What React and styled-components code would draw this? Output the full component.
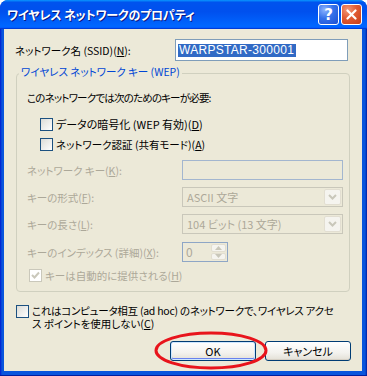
import React from 'react';
import styled, { createGlobalStyle } from 'styled-components';

const GlobalStyle = createGlobalStyle`
  html, body {
    margin: 0;
    padding: 0;
    background: #ffffff;
  }
`;

const Window = styled.div`
  position: relative;
  width: 367px;
  height: 376px;
  display: flex;
  flex-direction: column;
  box-sizing: border-box;
  background: linear-gradient(90deg, #0019cf 0, #0855dd 2px, #0855dd calc(100% - 2px), #001ea0 100%);
  border-bottom: 1px solid #001ea0;
  border-radius: 8px 8px 0 0;
  overflow: hidden;
  font-family: "Noto Sans CJK JP", "Noto Sans", sans-serif;
  font-size: 10.5px;
  font-feature-settings: "palt";
  color: #000000;
`;

const TitleBar = styled.div`
  height: 29px;
  flex: none;
  display: flex;
  align-items: center;
  padding: 0 5px 0 7px;
  background: linear-gradient(180deg, #0997ff, #0053ee 8%, #0050ee 40%, #0066ff 88%, #0066ff 93%, #005bff 95%, #003dd7 96%, #003dd7);
`;

const Title = styled.div`
  flex: 1;
  color: #ffffff;
  font-weight: bold;
  font-size: 12px;
  letter-spacing: -0.2px;
  text-shadow: 1px 1px 0 #0a1883;
  white-space: nowrap;
`;

const CaptionButton = styled.div`
  width: 21px;
  height: 21px;
  box-sizing: border-box;
  border: 1px solid #ffffff;
  border-radius: 3px;
  margin-left: 2px;
  display: flex;
  align-items: center;
  justify-content: center;
  color: #ffffff;
  font-family: "DejaVu Sans", sans-serif;
  font-weight: bold;
  font-size: 15px;
  background: ${p => p.$close
    ? 'radial-gradient(circle at 30% 25%, #f39878 0%, #e05b33 45%, #c63d17 100%)'
    : 'radial-gradient(circle at 30% 25%, #8cb4ff 0%, #3571ea 45%, #1c4fd2 100%)'};
`;

const Client = styled.div`
  flex: 1;
  margin: 0 5px 4px 4px;
  background: #ece9d8;
  padding: 10px 0 0 11px;
  display: flex;
  flex-direction: column;
`;

const FieldRow = styled.div`
  display: flex;
  align-items: center;
  height: ${p => p.$h || 20}px;
  margin-top: ${p => p.$mt || 0}px;
`;

const Label = styled.div`
  width: ${p => p.$w}px;
  flex: none;
  color: ${p => (p.$disabled ? '#aca899' : '#000000')};
  white-space: nowrap;
`;

const TextBox = styled.div`
  width: ${p => p.$w}px;
  height: 100%;
  box-sizing: border-box;
  border: 1px solid ${p => (p.$disabled ? '#a3b6cf' : '#7f9db9')};
  background: ${p => (p.$disabled ? '#ece9d8' : '#ffffff')};
  display: flex;
  align-items: center;
  padding-left: 2px;
  color: #aca899;
`;

const Selection = styled.span`
  background: #316ac5;
  color: #ffffff;
  font-family: "Liberation Sans", Arial, sans-serif;
  font-size: 12px;
  letter-spacing: 0.3px;
  line-height: 13px;
  padding: 0 2px 0 1px;
`;

const Combo = styled.div`
  width: 161px;
  height: 100%;
  box-sizing: border-box;
  border: 1px solid #c9c7ba;
  background: #ece9d8;
  display: flex;
  align-items: center;
  padding: 1px;
  color: #aca899;
`;

const ComboText = styled.span`
  flex: 1;
  padding-left: 3px;
  font-size: 11px;
`;

const DropButton = styled.div`
  width: 17px;
  height: 100%;
  box-sizing: border-box;
  border: 1px solid #e2ded1;
  border-radius: 2px;
  background: #f5f4ef;
  display: flex;
  align-items: center;
  justify-content: center;
`;

const Spin = styled.div`
  width: 46px;
  height: 100%;
  box-sizing: border-box;
  border: 1px solid #8ea6c6;
  background: #ece9d8;
  display: flex;
  padding: 1px;
  color: #aca899;
`;

const SpinText = styled.span`
  flex: 1;
  padding-left: 2px;
  font-size: 12px;
  line-height: 16px;
`;

const SpinButtons = styled.div`
  width: 15px;
  display: flex;
  flex-direction: column;
  gap: 1px;
`;

const SpinButton = styled.div`
  flex: 1;
  border: 1px solid #e2ded1;
  border-radius: 2px;
  background: #f5f4ef;
  display: flex;
  align-items: center;
  justify-content: center;
`;

const Group = styled.div`
  margin: 12px 0 0 1px;
  width: 334px;
  box-sizing: border-box;
  border: 1px solid #d0d0bf;
  border-radius: 4px;
  padding: 0 0 9px 10px;
  display: flex;
  flex-direction: column;
`;

const GroupTitle = styled.div`
  align-self: flex-start;
  margin: -9px 0 0 -8px;
  padding: 0 2px;
  line-height: 14px;
  color: #0046d5;
  background: #ece9d8;
  white-space: nowrap;
`;

const Text = styled.div`
  margin-top: ${p => p.$mt || 0}px;
  line-height: 14px;
  letter-spacing: -0.8px;
  white-space: nowrap;
`;

const CheckRow = styled.div`
  display: flex;
  align-items: ${p => (p.$top ? 'flex-start' : 'center')};
  gap: 3px;
  height: ${p => (p.$h ? `${p.$h}px` : 'auto')};
  margin: ${p => p.$mt || 0}px 0 0 ${p => p.$ml || 0}px;
  color: ${p => (p.$disabled ? '#aca899' : '#000000')};
`;

const Box = styled.span`
  width: 13px;
  height: 13px;
  flex: none;
  box-sizing: border-box;
  border: 1px solid ${p => (p.$disabled ? '#cac8bb' : '#1c5180')};
  background: ${p => (p.$disabled
    ? '#ffffff'
    : 'linear-gradient(135deg, #dcdcd7 0%, #f4f4f2 70%, #ffffff 100%)')};
  margin-top: ${p => p.$mt || 0}px;
  display: flex;
  align-items: center;
  justify-content: center;
`;

const CheckLabel = styled.span`
  font-size: ${p => p.$size || 10.5}px;
  line-height: 13px;
  white-space: nowrap;
`;

const LabelLine = styled.span`
  display: block;
  height: 13px;
  line-height: 13px;
  letter-spacing: ${p => (p.$tight ? '-0.25px' : '0')};
  white-space: nowrap;
`;

const ButtonRow = styled.div`
  display: flex;
  justify-content: flex-end;
  gap: 9px;
  margin-top: 11px;
  padding-right: 11px;
`;

const Button = styled.button`
  width: 86px;
  height: 20px;
  box-sizing: border-box;
  border: 1px solid #003c74;
  border-radius: 3px;
  background: linear-gradient(180deg, #ffffff 0%, #f3f2ee 60%, #e3e0d6 100%);
  box-shadow: ${p => (p.$default
    ? 'inset 0 0 0 1px #cee7ff, inset 0 -1px 0 1px #6982ee'
    : 'inset 0 -1px 0 #d6d0c5')};
  font-family: "Noto Sans CJK JP", "Noto Sans", sans-serif;
  font-feature-settings: "palt";
  font-size: 11px;
  color: #000000;
  padding: 0;
`;

const Mark = styled.svg`
  position: absolute;
  left: 154px;
  top: 331px;
  pointer-events: none;
`;

const Chevron = () => (
  <svg width="9" height="6" viewBox="0 0 9 6">
    <polyline points="1,1 4.5,4.5 8,1" fill="none" stroke="#c9c7ba" strokeWidth="2" />
  </svg>
);

const Arrow = ({ up }) => (
  <svg width="7" height="4" viewBox="0 0 7 4">
    <polygon points={up ? '0,4 3.5,0 7,4' : '0,0 3.5,4 7,0'} fill="#c9c7ba" />
  </svg>
);

const Check = () => (
  <svg width="9" height="9" viewBox="0 0 9 9">
    <polyline points="1,4 3.5,6.5 8,1.5" fill="none" stroke="#cac8bb" strokeWidth="2" />
  </svg>
);

export default function App() {
  return (
    <>
      <GlobalStyle />
      <Window>
        <TitleBar>
          <Title>ワイヤレス ネットワークのプロパティ</Title>
          <CaptionButton>?</CaptionButton>
          <CaptionButton $close>
            <svg width="11" height="11" viewBox="0 0 11 11">
              <path d="M1.5 1.5 L9.5 9.5 M9.5 1.5 L1.5 9.5" stroke="#ffffff" strokeWidth="2.2" strokeLinecap="round" />
            </svg>
          </CaptionButton>
        </TitleBar>

        <Client>
          <FieldRow $h={22}>
            <Label $w={160}>ネットワーク名 (SSID)(<u>N</u>):</Label>
            <TextBox $w={173}>
              <Selection>WARPSTAR-300001</Selection>
            </TextBox>
          </FieldRow>

          <Group>
            <GroupTitle>ワイヤレス ネットワーク キー (WEP)</GroupTitle>
            <Text $mt={12}>このネットワークでは次のためのキーが必要:</Text>
            <CheckRow $h={20} $mt={9} $ml={13}>
              <Box />
              <CheckLabel $size={11}>データの暗号化 (WEP 有効)(<u>D</u>)</CheckLabel>
            </CheckRow>
            <CheckRow $h={20} $ml={13}>
              <Box />
              <CheckLabel>ネットワーク認証 (共有モード)(<u>A</u>)</CheckLabel>
            </CheckRow>

            <FieldRow $mt={6}>
              <Label $w={155} $disabled>ネットワーク キー(<u>K</u>):</Label>
              <TextBox $w={161} $disabled />
            </FieldRow>
            <FieldRow $mt={7}>
              <Label $w={155} $disabled>キーの形式(<u>F</u>):</Label>
              <Combo>
                <ComboText>ASCII 文字</ComboText>
                <DropButton><Chevron /></DropButton>
              </Combo>
            </FieldRow>
            <FieldRow $mt={7}>
              <Label $w={155} $disabled>キーの長さ(<u>L</u>):</Label>
              <Combo>
                <ComboText>104 ビット (13 文字)</ComboText>
                <DropButton><Chevron /></DropButton>
              </Combo>
            </FieldRow>
            <FieldRow $mt={8}>
              <Label $w={155} $disabled>キーのインデックス (詳細)(<u>X</u>):</Label>
              <Spin>
                <SpinText>0</SpinText>
                <SpinButtons>
                  <SpinButton><Arrow up /></SpinButton>
                  <SpinButton><Arrow /></SpinButton>
                </SpinButtons>
              </Spin>
            </FieldRow>
            <CheckRow $h={14} $mt={6} $ml={2} $disabled>
              <Box $disabled><Check /></Box>
              <CheckLabel>キーは自動的に提供される(<u>H</u>)</CheckLabel>
            </CheckRow>
          </Group>

          <CheckRow $top $mt={12} $ml={1}>
            <Box $mt={1} />
            <div>
              <LabelLine $tight>これはコンピュータ相互 (ad hoc) のネットワークで、ワイヤレス アクセ</LabelLine>
              <LabelLine>ス ポイントを使用しない(<u>C</u>)</LabelLine>
            </div>
          </CheckRow>

          <ButtonRow>
            <Button $default>OK</Button>
            <Button>キャンセル</Button>
          </ButtonRow>
        </Client>

        <Mark width="114" height="39" viewBox="0 0 114 39">
          <ellipse cx="57" cy="19.5" rx="55" ry="17.5" fill="none" stroke="#e8141c" strokeWidth="3" />
        </Mark>
      </Window>
    </>
  );
}
